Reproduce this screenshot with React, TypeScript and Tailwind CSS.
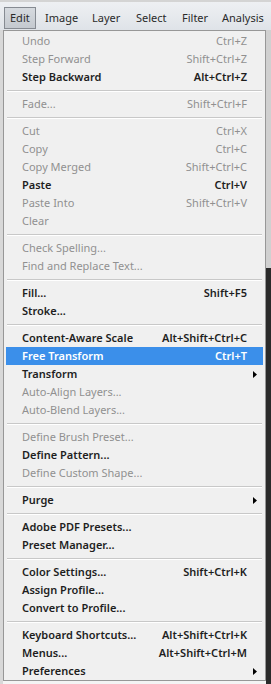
import React from 'react';

type Item =
  | { sep: true }
  | { label: string; keys?: string; on?: boolean; sub?: boolean; hot?: boolean };

const items: Item[] = [
  { label: 'Undo', keys: 'Ctrl+Z' },
  { label: 'Step Forward', keys: 'Shift+Ctrl+Z' },
  { label: 'Step Backward', keys: 'Alt+Ctrl+Z', on: true },
  { sep: true },
  { label: 'Fade...', keys: 'Shift+Ctrl+F' },
  { sep: true },
  { label: 'Cut', keys: 'Ctrl+X' },
  { label: 'Copy', keys: 'Ctrl+C' },
  { label: 'Copy Merged', keys: 'Shift+Ctrl+C' },
  { label: 'Paste', keys: 'Ctrl+V', on: true },
  { label: 'Paste Into', keys: 'Shift+Ctrl+V' },
  { label: 'Clear' },
  { sep: true },
  { label: 'Check Spelling...' },
  { label: 'Find and Replace Text...' },
  { sep: true },
  { label: 'Fill...', keys: 'Shift+F5', on: true },
  { label: 'Stroke...', on: true },
  { sep: true },
  { label: 'Content-Aware Scale', keys: 'Alt+Shift+Ctrl+C', on: true },
  { label: 'Free Transform', keys: 'Ctrl+T', on: true, hot: true },
  { label: 'Transform', on: true, sub: true },
  { label: 'Auto-Align Layers...' },
  { label: 'Auto-Blend Layers...' },
  { sep: true },
  { label: 'Define Brush Preset...' },
  { label: 'Define Pattern...', on: true },
  { label: 'Define Custom Shape...' },
  { sep: true },
  { label: 'Purge', on: true, sub: true },
  { sep: true },
  { label: 'Adobe PDF Presets...', on: true },
  { label: 'Preset Manager...', on: true },
  { sep: true },
  { label: 'Color Settings...', keys: 'Shift+Ctrl+K', on: true },
  { label: 'Assign Profile...', on: true },
  { label: 'Convert to Profile...', on: true },
  { sep: true },
  { label: 'Keyboard Shortcuts...', keys: 'Alt+Shift+Ctrl+K', on: true },
  { label: 'Menus...', keys: 'Alt+Shift+Ctrl+M', on: true },
  { label: 'Preferences', on: true, sub: true },
];

// menubar labels after "Edit", with the width each one takes up
const menus = [
  { name: 'Image', w: 'w-[47px]' },
  { name: 'Layer', w: 'w-[44px]' },
  { name: 'Select', w: 'w-[46px]' },
  { name: 'Filter', w: 'w-[40px]' },
  { name: 'Analysis', w: 'w-[49px]' },
];

function Arrow({ white }: { white?: boolean }) {
  return (
    <svg width="4" height="7" viewBox="0 0 4 7" className={white ? 'text-white' : 'text-black'}>
      <path d="M0 0 L4 3.5 L0 7 Z" fill="currentColor" />
    </svg>
  );
}

export default function App() {
  return (
    <div
      className="w-[271px] h-[684px] overflow-hidden flex flex-col bg-[#f4f4f4] text-[11px]"
      style={{ fontFamily: '"Noto Sans", "Open Sans", sans-serif' }}
    >
      {/* menubar */}
      <div className="h-[30px] shrink-0 flex items-end pb-px pl-1 border-t-2 border-[#d4d4d4] bg-gradient-to-b from-[#eef0f3] to-[#dfe3e8] text-[#2a2a2a]">
        <div className="h-[22px] w-[32px] pl-[5px] flex items-center border border-[#868b92] bg-gradient-to-b from-[#d6dadf] to-[#c4c9cf]">
          Edit
        </div>
        <div className="w-[9px]" />
        {menus.map((m) => (
          <div key={m.name} className={'h-[22px] shrink-0 flex items-center ' + m.w}>
            {m.name}
          </div>
        ))}
      </div>

      <div className="flex flex-1 min-h-0">
        <div className="w-[3px] bg-[#d8d8d8]" />

        {/* the Edit menu */}
        <div className="w-[263px] h-[651px] bg-[#f0f0f0] border border-[#979797] pt-px px-[2px] flex flex-col">
          {items.map((it, i) =>
            'sep' in it ? (
              <div key={i} className="h-[9px] flex flex-col justify-center px-[1px]">
                <div className="h-px bg-[#c8c8c8]" />
                <div className="h-px bg-white" />
              </div>
            ) : (
              <div
                key={i}
                className={
                  'h-[18px] shrink-0 flex items-center pl-[16px] pr-[14px] ' +
                  (it.hot
                    ? 'bg-[#3b8fea] text-white font-semibold'
                    : it.on
                    ? 'text-[#1e1e1e] font-semibold'
                    : 'text-[#909090]')
                }
              >
                <span className="flex-1">{it.label}</span>
                {it.keys && <span className="mr-[2px]">{it.keys}</span>}
                {it.sub && (
                  <span className="mr-[-8px]">
                    <Arrow white={it.hot} />
                  </span>
                )}
              </div>
            )
          )}
        </div>

        {/* window behind, to the right */}
        <div className="flex-1 flex flex-col">
          <div className="h-[238px] bg-[#d0d0d0]" />
          <div className="flex-1 bg-[#2a2a2a]" />
        </div>
      </div>
    </div>
  );
}
